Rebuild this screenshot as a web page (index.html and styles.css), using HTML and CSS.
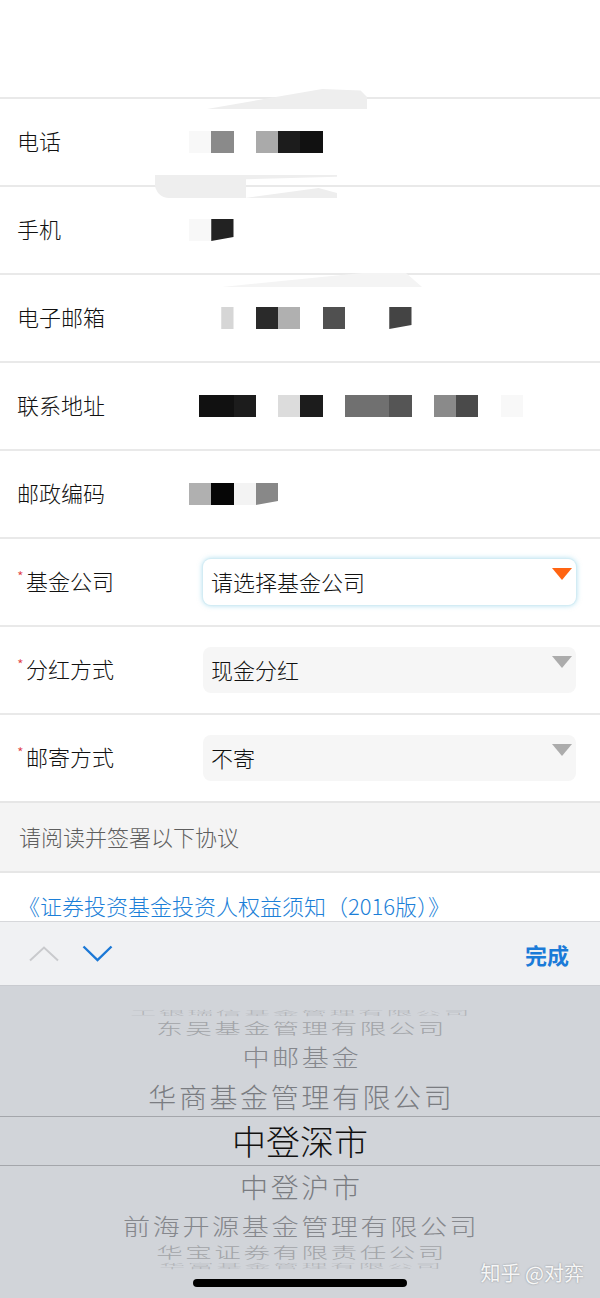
FILE: index.html
```html
<!DOCTYPE html>
<html lang="zh-CN">
<head>
<meta charset="utf-8">
<title>基金开户</title>
<link rel="stylesheet" href="styles.css">
</head>
<body>
<div class="screen">
  <div class="page">
    <div class="top"></div>

    <div class="row">
      <div class="label">电话</div>
      <div class="mask">
        <span class="px bfa"></span><span class="px b8a"></span><span class="px"></span><span class="px baa"></span><span class="px b1c"></span><span class="px b11"></span>
      </div>
    </div>

    <div class="row">
      <div class="label">手机</div>
      <div class="mask">
        <span class="px bfa"></span><span class="px b22 slant"></span>
      </div>
    </div>

    <div class="row">
      <div class="label">电子邮箱</div>
      <div class="mask">
        <span class="px"></span><span class="px bd6 part"></span><span class="px"></span><span class="px b2a"></span><span class="px bb0"></span><span class="px"></span><span class="px b50"></span><span class="px"></span><span class="px"></span><span class="px b44 slant"></span>
      </div>
    </div>

    <div class="row">
      <div class="label">联系地址</div>
      <div class="mask">
        <span class="px b11 part"></span><span class="px b11"></span><span class="px b1c"></span><span class="px"></span><span class="px bdd"></span><span class="px b1c"></span><span class="px"></span><span class="px b70"></span><span class="px b70"></span><span class="px b55"></span><span class="px"></span><span class="px b8a"></span><span class="px b4a"></span><span class="px"></span><span class="px bfa"></span>
      </div>
    </div>

    <div class="row">
      <div class="label">邮政编码</div>
      <div class="mask">
        <span class="px bb0"></span><span class="px b05"></span><span class="px bf4"></span><span class="px b88 slant"></span>
      </div>
    </div>

    <div class="row">
      <div class="label"><span class="req">*</span>基金公司</div>
      <div class="select focus"><span class="val">请选择基金公司</span><span class="caret active"></span></div>
    </div>

    <div class="row">
      <div class="label"><span class="req">*</span>分红方式</div>
      <div class="select"><span class="val">现金分红</span><span class="caret"></span></div>
    </div>

    <div class="row">
      <div class="label"><span class="req">*</span>邮寄方式</div>
      <div class="select"><span class="val">不寄</span><span class="caret"></span></div>
    </div>

    <div class="notice">请阅读并签署以下协议</div>
    <div class="links"><span class="doc">《证券投资基金投资人权益须知（2016版）》</span></div>
  </div>

  <div class="smudge s1"></div>
  <div class="smudge s2"></div>
  <div class="smudge s3"></div>
  <div class="smudge s4"></div>

  <div class="toolbar">
    <svg class="chev" width="30" height="16" viewBox="0 0 30 16"><polyline points="1,14.5 15,1.5 29,14.5" fill="none" stroke="#c9cacd" stroke-width="2"/></svg>
    <svg class="chev" width="31" height="17" viewBox="0 0 31 17"><polyline points="1.5,1.5 15.5,15 29.5,1.5" fill="none" stroke="#1b78d6" stroke-width="2.4"/></svg>
    <span class="done">完成</span>
  </div>

  <div class="picker">
    <div class="item up4"><span>工银瑞信基金管理有限公司</span></div>
    <div class="item up3"><span>东吴基金管理有限公司</span></div>
    <div class="item up2"><span>中邮基金</span></div>
    <div class="item up1"><span>华商基金管理有限公司</span></div>
    <div class="item sel"><span>中登深市</span></div>
    <div class="item dn1"><span>中登沪市</span></div>
    <div class="item dn2"><span>前海开源基金管理有限公司</span></div>
    <div class="item dn3"><span>华宝证券有限责任公司</span></div>
    <div class="item dn4"><span>华富基金管理有限公司</span></div>
  </div>

  <div class="home"></div>
  <div class="watermark">知乎 @对弈</div>
</div>
</body>
</html>
```

FILE: styles.css
```css
* { box-sizing: border-box; }

html, body {
  margin: 0;
  padding: 0;
  background: #fff;
}

.screen {
  position: relative;
  width: 600px;
  height: 1298px;
  overflow: hidden;
  font-family: "Noto Sans CJK SC", "Noto Sans", sans-serif;
  font-weight: 300;
  color: #111;
}

.page {
  height: 921px;
  overflow: hidden;
  background: #fff;
}

.top {
  height: 97px;
}

.row {
  height: 88px;
  border-top: 2px solid #e9e9e9;
  display: flex;
  align-items: center;
}

.label {
  width: 189px;
  flex: none;
  padding-left: 17px;
  padding-bottom: 4px;
  font-size: 22px;
  line-height: 30px;
  color: #111;
  display: flex;
  align-items: center;
}

.req {
  color: #e0393e;
  font-size: 15px;
  line-height: 15px;
  width: 9px;
  align-self: flex-start;
  margin-top: 4px;
}

.mask {
  display: flex;
  align-items: center;
}

.px {
  width: 22.25px;
  height: 22px;
  flex: none;
}

.slant { clip-path: polygon(0 0, 100% 0, 100% 82%, 0 100%); }
.part  { clip-path: polygon(45% 0, 100% 0, 100% 100%, 45% 100%); }

.b05 { background: #060606; }
.b11 { background: #111; }
.b1c { background: #1c1c1c; }
.b22 { background: #222; }
.b2a { background: #2a2a2a; }
.b44 { background: #444; }
.b4a { background: #4a4a4a; }
.b50 { background: #505050; }
.b55 { background: #555; }
.b70 { background: #707070; }
.b88 { background: #888; }
.b8a { background: #8a8a8a; }
.baa { background: #aaa; }
.bb0 { background: #b0b0b0; }
.bd6 { background: #d6d6d6; }
.bdd { background: #dcdcdc; }
.bf4 { background: #f3f3f3; }
.bfa { background: #f8f8f8; }

.select {
  margin-left: 14px;
  width: 373px;
  height: 46px;
  border-radius: 8px;
  background: #f6f6f6;
  display: flex;
  justify-content: space-between;
  align-items: center;
  padding-left: 8px;
}

.select.focus {
  background: #fff;
  box-shadow: 0 0 0 1px #d3ecf4, 0 0 5px 1px rgba(120, 200, 228, 0.55);
}

.val {
  font-size: 22px;
  line-height: 30px;
  color: #111;
  margin-top: -2px;
}

.caret {
  align-self: flex-start;
  margin-top: 9px;
  margin-right: 4px;
  width: 0;
  height: 0;
  border-left: 10px solid transparent;
  border-right: 10px solid transparent;
  border-top: 12px solid #acacac;
}

.caret.active {
  border-top-color: #ff6412;
}

.notice {
  border-top: 2px solid #e6e6e6;
  background: #f4f4f4;
  height: 70px;
  display: flex;
  align-items: center;
  padding-left: 19px;
  padding-bottom: 3px;
  font-size: 22px;
  color: #5e5e5e;
}

.links {
  border-top: 2px solid #e6e6e6;
  height: 60px;
  padding: 17px 0 0 18px;
  font-size: 22px;
  line-height: 30px;
}

.doc {
  color: #1c7fd8;
}

.smudge {
  position: absolute;
  background: #eeeeee;
}

.s1 {
  left: 207px;
  top: 89px;
  width: 160px;
  height: 20px;
  clip-path: polygon(0 100%, 72% 0, 96% 8%, 100% 40%, 100% 100%);
}

.s2 {
  left: 155px;
  top: 175px;
  width: 182px;
  height: 23px;
  border-radius: 0 0 0 14px;
  clip-path: polygon(0 0, 100% 0, 100% 8%, 50% 18%, 50% 100%, 0 100%);
}

.s3 {
  left: 245px;
  top: 188px;
  width: 92px;
  height: 10px;
  clip-path: polygon(0 100%, 80% 0, 100% 50%, 100% 100%);
}

.s4 {
  left: 222px;
  top: 273px;
  width: 200px;
  height: 14px;
  background: #f4f4f4;
  clip-path: polygon(0 100%, 70% 0, 92% 0, 100% 100%);
}

.toolbar {
  height: 64px;
  border-top: 1px solid #d7d8db;
  background: #f0f1f3;
  display: flex;
  align-items: center;
  padding-left: 29px;
}

.chev {
  display: block;
  margin-right: 23px;
}

.done {
  margin-left: auto;
  margin-right: 31px;
  font-size: 22px;
  font-weight: 700;
  color: #1b7bd8;
  line-height: 30px;
}

.picker {
  height: 313px;
  background: #d1d4d9;
  border-top: 1px solid #c9cbd0;
  padding-top: 18px;
  display: flex;
  flex-direction: column;
}

.item {
  flex: none;
  display: flex;
  align-items: center;
  justify-content: center;
  overflow: visible;
}

.item span {
  display: block;
  font-size: 28px;
  line-height: 30px;
  letter-spacing: 2.6px;
  padding-left: 2.6px;
  white-space: nowrap;
  color: #7c7e83;
}

.up4 { height: 16px; }
.up3 { height: 16px; }
.up2 { height: 40px; }
.up1 { height: 40px; }
.sel { height: 50px; border-top: 1px solid #a4a6ab; border-bottom: 1px solid #a4a6ab; }
.dn1 { height: 40px; }
.dn2 { height: 38px; }
.dn3 { height: 16px; }
.dn4 { height: 10px; }

.up4 span, .dn4 span { transform: scale(0.93, 0.22); color: #b4b6ba; }
.up3 span, .dn3 span { transform: scale(0.95, 0.52); color: #a2a4a8; }
.up2 span, .dn2 span { transform: scale(0.97, 0.8); color: #85878c; }
.up1 span, .dn1 span { transform: scale(1, 0.96); color: #7a7c81; }

.sel span {
  font-size: 34px;
  line-height: 40px;
  letter-spacing: 0;
  padding-left: 0;
  color: #111;
}

.home {
  position: absolute;
  left: 193px;
  bottom: 11px;
  width: 214px;
  height: 8px;
  border-radius: 4px;
  background: #000;
}

.watermark {
  position: absolute;
  right: 16px;
  top: 1260px;
  font-size: 20px;
  line-height: 26px;
  font-weight: 400;
  color: rgba(255, 255, 255, 0.92);
  text-shadow: 0 0 2px rgba(0, 0, 0, 0.35);
}
```
